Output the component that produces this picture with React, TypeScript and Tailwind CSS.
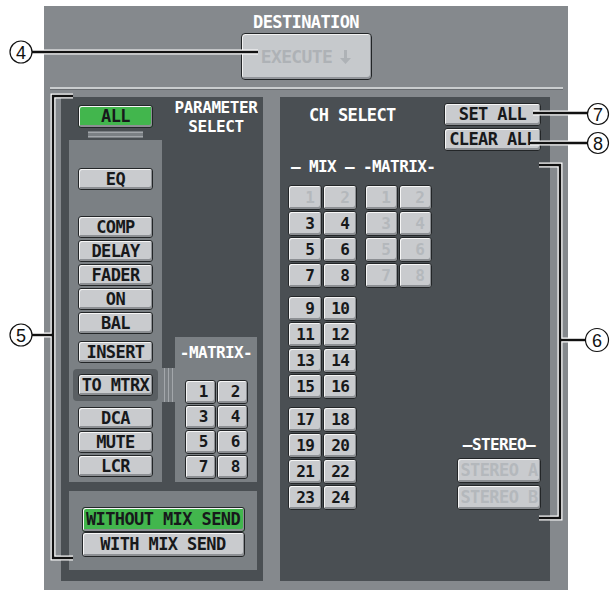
import clsx from 'clsx';
import type { ReactNode } from 'react';

const FONT = "font-['DejaVu_Sans_Mono',monospace] font-bold";

interface BtnProps {
  children?: ReactNode;
  className?: string;
  green?: boolean;
  dim?: boolean;
  num?: boolean;
}

const Btn = ({ children, className, green, dim, num }: BtnProps) => (
  <div
    className={clsx(
      'flex items-center leading-none border border-[#232628] rounded-[3px] shadow-[inset_1px_1px_0_#f6f6f6,inset_-1px_-2px_0_#8c8f93] whitespace-nowrap',
      FONT,
      green ? 'bg-[#42b64d] shadow-[inset_1px_1px_0_#8fe08f,inset_-1px_-2px_0_#2c8a36]' : 'bg-[#c9cbce]',
      dim ? 'text-[#b4b8bc]' : 'text-[#17191b]',
      num ? 'justify-end pr-[7px] text-[16px] tracking-[-0.8px]' : 'justify-center text-[17px] tracking-[-0.6px]',
      className
    )}
  >
    {children}
  </div>
);

// a group of numbered channel buttons, two per row
const NumGrid = ({ nums, dim, w, h }: { nums: number[]; dim?: (n: number) => boolean; w: string; h: string }) => {
  const rows: number[][] = [];
  for (let i = 0; i < nums.length; i += 2) rows.push(nums.slice(i, i + 2));
  return (
    <div className="flex flex-col gap-px">
      {rows.map((r) => (
        <div key={r[0]} className="flex gap-px">
          {r.map((n) => (
            <Btn key={n} num dim={dim ? dim(n) : false} className={clsx(w, h)}>
              {n}
            </Btn>
          ))}
        </div>
      ))}
    </div>
  );
};

const Label = ({ children, className }: { children: ReactNode; className?: string }) => (
  <div className={clsx(FONT, 'text-white text-[16px] tracking-[-0.6px] leading-[14px] whitespace-nowrap', className)}>
    {children}
  </div>
);

const DownArrow = () => (
  <svg width="11" height="14" viewBox="0 0 11 14">
    <path d="M4 0h3v8h4l-5.5 6L0 8h4z" fill="#aeb2b6" />
  </svg>
);

const Callouts = () => {
  const lines = [
    'M32,52 H258',
    'M73,96 H53 V558 H73',
    'M53,335 H32',
    'M539,165 H560 V518 H539',
    'M560,340 H586',
    'M533,113 H588',
    'M530,143 H588',
  ];
  const circles: [number, number, number, string][] = [
    [21, 52, 11, '4'],
    [21, 335, 11, '5'],
    [597, 340, 11.5, '6'],
    [598, 114, 10.5, '7'],
    [598, 143, 10.5, '8'],
  ];
  return (
    <svg className="absolute inset-0 pointer-events-none" width={615} height={590}>
      {lines.map((d) => (
        <path key={'w' + d} d={d} fill="none" stroke="#fff" strokeWidth={5} />
      ))}
      {lines.map((d) => (
        <path key={'b' + d} d={d} fill="none" stroke="#111" strokeWidth={2.4} />
      ))}
      {circles.map(([x, y, r, t]) => (
        <g key={t}>
          <circle cx={x} cy={y} r={r} fill="#fff" stroke="#111" strokeWidth={1.2} />
          <text
            x={x}
            y={y + 6.5}
            textAnchor="middle"
            fontFamily="'Liberation Sans', sans-serif"
            fontSize={18}
            fill="#111"
          >
            {t}
          </text>
        </g>
      ))}
    </svg>
  );
};

export default function App() {
  return (
    <div className="relative w-[615px] h-[590px] bg-white overflow-hidden">
      <div className="ml-[44px] mt-[6px] w-[524px] h-[584px] bg-[#85898d] flex flex-col">
        {/* destination */}
        <div className="h-[81px] flex flex-col items-center">
          <div className={clsx(FONT, 'mt-[9px] text-[17px] tracking-[-0.6px] leading-[14px] text-white')}>DESTINATION</div>
          <div
            className={clsx(
              FONT,
              'mt-[4px] w-[131px] h-[47px] flex items-center justify-center gap-[8px] text-[18px] tracking-[-0.6px] text-[#aeb2b6] bg-[#c6c9cc] border-[1.5px] border-[#222527] rounded-[4px] shadow-[inset_1px_1px_0_#f2f2f2,inset_-1px_-2px_0_#92959a]'
            )}
          >
            EXECUTE
            <DownArrow />
          </div>
        </div>
        <div className="ml-[6px] mr-[5px] h-[3px] bg-[#c9ccce] border-b border-[#6a6e72]" />

        <div className="mt-[7px] flex gap-[17px] pl-[17px]">
          {/* parameter select */}
          <div className="w-[202px] h-[484px] bg-[#4a4f53] flex flex-col pl-[8px] pr-[6px]">
            <div className="h-[385px] flex">
              <div className="w-[93px] flex flex-col">
                <Btn green className="mt-[8px] mx-[9px] h-[23px]">ALL</Btn>
                <div className="h-[12px] flex justify-center">
                  <div className="mt-[3px] w-[55px] h-[7px] bg-[#7b8084] flex flex-col justify-around">
                    <div className="h-px bg-[#a3a7ab]" />
                    <div className="h-px bg-[#a3a7ab]" />
                  </div>
                </div>
                <div className="flex-1 bg-[#7b8084] flex flex-col px-[9px] pt-[28px]">
                  <Btn className="h-[22px]">EQ</Btn>
                  <div className="mt-[26px] flex flex-col gap-[2px]">
                    {['COMP', 'DELAY', 'FADER', 'ON', 'BAL'].map((t) => (
                      <Btn key={t} className="h-[22px]">{t}</Btn>
                    ))}
                  </div>
                  <Btn className="mt-[7px] h-[22px]">INSERT</Btn>
                  <div className="mt-[6px] -mx-[5px] h-[32px] bg-[#5a5f63] rounded-[4px] p-[5px]">
                    <Btn className="h-[22px]">TO MTRX</Btn>
                  </div>
                  <div className="mt-[6px] flex flex-col gap-[2px]">
                    {['DCA', 'MUTE', 'LCR'].map((t) => (
                      <Btn key={t} className="h-[22px]">{t}</Btn>
                    ))}
                  </div>
                </div>
              </div>
              <div className="w-[13px] flex flex-col justify-end">
                <div className="h-[34px] bg-[#7b8084] flex justify-center gap-[3px]">
                  <div className="w-px bg-[#a3a7ab]" />
                  <div className="w-px bg-[#a3a7ab]" />
                  <div className="w-px bg-[#a3a7ab]" />
                </div>
                <div className="h-[80px]" />
              </div>
              <div className="w-[82px] flex flex-col items-center">
                <div className={clsx(FONT, 'mt-[1px] text-white text-[16px] tracking-[-0.4px] leading-[19px] text-center whitespace-nowrap')}>
                  <div>PARAMETER</div>
                  <div>SELECT</div>
                </div>
                <div className="mt-auto w-[82px] h-[145px] bg-[#7b8084] flex flex-col items-center pt-[9px]">
                  <Label>-MATRIX-</Label>
                  <div className="mt-[20px]">
                    <NumGrid nums={[1, 2, 3, 4, 5, 6, 7, 8]} w="w-[31px]" h="h-[24px]" />
                  </div>
                </div>
              </div>
            </div>
            <div className="mt-[9px] h-[79px] bg-[#7b8084] flex flex-col items-center pt-[16px]">
              <Btn green className="w-[163px] h-[25px]">WITHOUT MIX SEND</Btn>
              <Btn className="w-[163px] h-[25px]">WITH MIX SEND</Btn>
            </div>
          </div>

          {/* channel select */}
          <div className="w-[270px] h-[484px] bg-[#4a4f53] flex flex-col">
            <div className="flex justify-between pl-[29px] pr-[9px] pt-[6px]">
              <div className={clsx(FONT, 'mt-[5px] text-white text-[17px] tracking-[-0.6px] leading-[14px]')}>CH SELECT</div>
              <div className="w-[97px] flex flex-col gap-[2px]">
                <Btn className="h-[23px]">SET ALL</Btn>
                <Btn className="h-[23px]">CLEAR ALL</Btn>
              </div>
            </div>
            <div className="mt-[9px] flex pl-[6px]">
              <Label className="w-[73px] text-center">—&nbsp;MIX&nbsp;—</Label>
              <Label className="ml-[4px] w-[70px] text-center">-MATRIX-</Label>
            </div>
            <div className="mt-[11px] flex pl-[8px]">
              <div className="flex flex-col gap-[8px]">
                <NumGrid nums={[1, 2, 3, 4, 5, 6, 7, 8]} dim={(n) => n < 3} w="w-[34px]" h="h-[25px]" />
                <NumGrid nums={[9, 10, 11, 12, 13, 14, 15, 16]} w="w-[34px]" h="h-[25px]" />
                <NumGrid nums={[17, 18, 19, 20, 21, 22, 23, 24]} w="w-[34px]" h="h-[25px]" />
              </div>
              <div className="ml-[8px]">
                <NumGrid nums={[1, 2, 3, 4, 5, 6, 7, 8]} dim={() => true} w="w-[33px]" h="h-[25px]" />
              </div>
              <div className="flex-1 flex flex-col justify-end items-end pr-[9px]">
                <Label className="w-[84px] text-center mb-[6px]">—STEREO—</Label>
                <div className="w-[84px] flex flex-col gap-[2px]">
                  <Btn dim className="h-[25px]">STEREO A</Btn>
                  <Btn dim className="h-[25px]">STEREO B</Btn>
                </div>
              </div>
            </div>
          </div>
        </div>
      </div>
      <Callouts />
    </div>
  );
}
